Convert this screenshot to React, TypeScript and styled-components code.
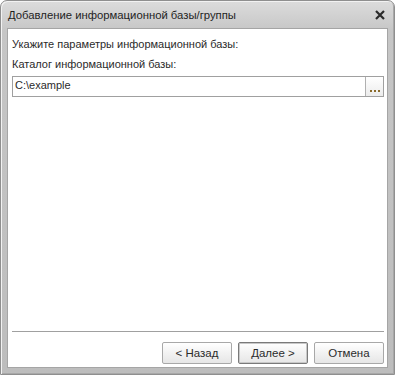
import React from "react";
import styled, { createGlobalStyle } from "styled-components";

const Global = createGlobalStyle`
  html, body { margin: 0; padding: 0; background: #ffffff; }
  #root { width: 395px; height: 375px; }
`;

const Window = styled.div`
  box-sizing: border-box;
  width: 395px;
  height: 375px;
  display: flex;
  flex-direction: column;
  background: linear-gradient(#dcdcdc, #c6c6c6 30px, #bdbdbd);
  border: 1px solid #8f8f8f;
  border-radius: 7px 7px 0 0;
  box-shadow: inset 1px 1px 0 #f2f2f2, inset -1px -1px 0 #a8a8a8;
  font-family: "Liberation Sans", Arial, sans-serif;
  color: #2b2b2b;
`;

const TitleBar = styled.div`
  height: 27px;
  display: flex;
  align-items: center;
  justify-content: space-between;
  padding: 0 9px 0 7px;
  font-size: 11.3px;
  color: #1f1f1f;
`;

const CloseIcon = styled.svg`
  width: 10px;
  height: 10px;
`;

const Body = styled.div`
  flex: 1;
  margin: 0 6px 6px 6px;
  background: #ffffff;
  border: 1px solid #a5a5a5;
  display: flex;
  flex-direction: column;
  padding: 6px 3px 0 4px;
`;

const Label = styled.div`
  font-size: 11px;
  height: 20px;
  line-height: 18px;
`;

const InputRow = styled.div`
  display: flex;
  height: 19px;
  border: 1px solid #a0a0a0;
  margin-top: 1px;
`;

const Input = styled.div`
  flex: 1;
  font-size: 11px;
  line-height: 17px;
  padding-left: 2px;
`;

const DotsButton = styled.div`
  width: 18px;
  border-left: 1px solid #b0b0b0;
  background: linear-gradient(#ffffff, #ececec);
  display: flex;
  align-items: flex-end;
  justify-content: center;
  padding-bottom: 4px;
  box-sizing: border-box;
  gap: 2px;
`;

const Dot = styled.span`
  width: 2px;
  height: 2px;
  background: #8a6a2a;
`;

const Spacer = styled.div`
  flex: 1;
`;

const Separator = styled.div`
  height: 1px;
  background: #a0a0a0;
`;

const Footer = styled.div`
  display: flex;
  justify-content: flex-end;
  gap: 6px;
  padding: 10px 0 3px 0;
`;

const Button = styled.button<{ $default?: boolean }>`
  box-sizing: border-box;
  width: 70px;
  height: 22px;
  font-family: "Liberation Sans", Arial, sans-serif;
  font-size: 11.5px;
  color: #2b2b2b;
  background: linear-gradient(#ffffff, #f2f2f2 50%, #e6e6e6);
  border: 1px solid ${(p) => (p.$default ? "#7a7a7a" : "#a8a8a8")};
  box-shadow: ${(p) => (p.$default ? "inset 0 0 0 1px #c8c8c8" : "none")};
  border-radius: 2px;
  padding: 0;
`;

export default function App() {
  return (
    <>
      <Global />
      <Window>
        <TitleBar>
          <span>Добавление информационной базы/группы</span>
          <CloseIcon viewBox="0 0 10 10">
            <path d="M1 1 L9 9 M9 1 L1 9" stroke="#2a2a2a" strokeWidth="2.2" />
          </CloseIcon>
        </TitleBar>
        <Body>
          <Label>Укажите параметры информационной базы:</Label>
          <Label>Каталог информационной базы:</Label>
          <InputRow>
            <Input>C:\example</Input>
            <DotsButton>
              <Dot />
              <Dot />
              <Dot />
            </DotsButton>
          </InputRow>
          <Spacer />
          <Separator />
          <Footer>
            <Button>&lt; Назад</Button>
            <Button $default>Далее &gt;</Button>
            <Button>Отмена</Button>
          </Footer>
        </Body>
      </Window>
    </>
  );
}
